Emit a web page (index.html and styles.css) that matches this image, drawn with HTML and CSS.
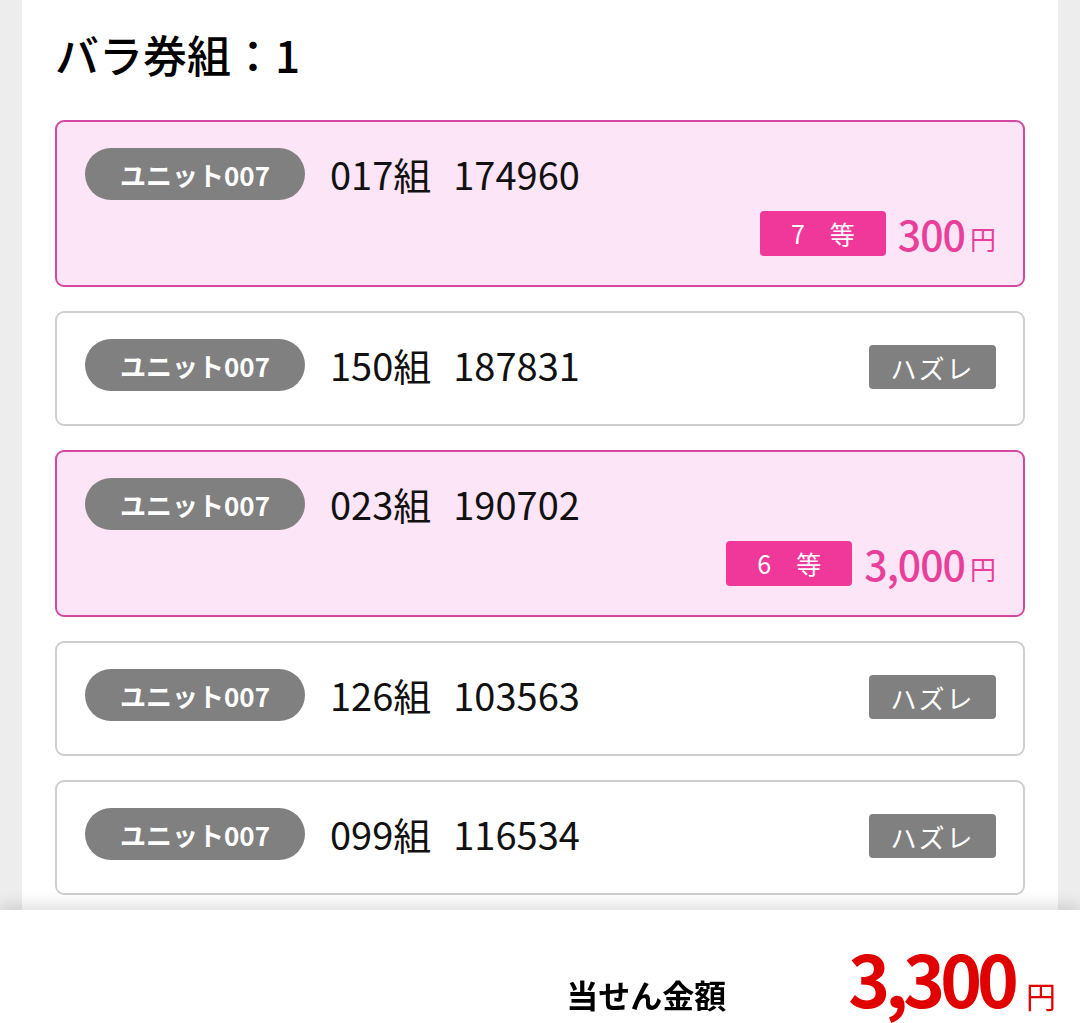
FILE: index.html
```html
<!DOCTYPE html>
<html lang="ja">
<head>
  <meta charset="UTF-8" />
  <title>当せん結果</title>
  <link rel="stylesheet" href="styles.css">
</head>
<body>

  <!-- Result panel -->
  <div class="panel">
    <h2 class="title">バラ券組：1</h2>

    <div class="ticket-list">
      <div class="ticket win">
        <div class="ticket-row">
          <span class="unit">ユニット007</span>
          <span class="number">017組<span class="no">174960</span></span>
        </div>
        <div class="prize-row">
          <span class="rank">7　等</span>
          <span class="amount">300</span><span class="yen">円</span>
        </div>
      </div>

      <div class="ticket">
        <div class="ticket-row">
          <span class="unit">ユニット007</span>
          <span class="number">150組<span class="no">187831</span></span>
          <span class="miss">ハズレ</span>
        </div>
      </div>

      <div class="ticket win">
        <div class="ticket-row">
          <span class="unit">ユニット007</span>
          <span class="number">023組<span class="no">190702</span></span>
        </div>
        <div class="prize-row">
          <span class="rank">6　等</span>
          <span class="amount">3,000</span><span class="yen">円</span>
        </div>
      </div>

      <div class="ticket">
        <div class="ticket-row">
          <span class="unit">ユニット007</span>
          <span class="number">126組<span class="no">103563</span></span>
          <span class="miss">ハズレ</span>
        </div>
      </div>

      <div class="ticket">
        <div class="ticket-row">
          <span class="unit">ユニット007</span>
          <span class="number">099組<span class="no">116534</span></span>
          <span class="miss">ハズレ</span>
        </div>
      </div>
    </div>
  </div>

  <!-- Total footer -->
  <footer class="total-bar">
    <span class="total-label">当せん金額</span>
    <span class="total-amount">3,300</span><span class="total-yen">円</span>
  </footer>

</body>
</html>
```

FILE: styles.css
```css
* { box-sizing: border-box; margin: 0; padding: 0; }
html, body {
  font-family: 'Noto Sans CJK JP', 'Noto Sans', sans-serif;
  background: #ededed;
  color: #111;
}

/* PANEL */
.panel {
  margin: 0 22px;
  background: #fff;
  padding: 26px 33px 140px;
}

.title {
  font-size: 44px;
  font-weight: 500;
  line-height: 56px;
  margin-bottom: 38px;
  color: #000;
}

.ticket-list {
  display: flex;
  flex-direction: column;
  gap: 24px;
}

/* TICKET CARD */
.ticket {
  border: 2px solid #cfcfcf;
  border-radius: 9px;
  padding: 26px 27px 33px 28px;
  background: #fff;
}

.ticket.win {
  background: #fde5f8;
  border-color: #d4499f;
  padding-bottom: 29px;
}

.ticket-row {
  display: flex;
  align-items: center;
}

.unit {
  display: inline-flex;
  align-items: center;
  justify-content: center;
  width: 220px;
  height: 52px;
  border-radius: 26px;
  background: #808080;
  color: #fff;
  font-size: 26px;
  font-weight: bold;
}

.number {
  margin-left: 25px;
  font-size: 38px;
  line-height: 52px;
  color: #111;
}

.number .no { margin-left: 22px; }

.miss {
  margin-left: auto;
  margin-top: 4px;
  width: 127px;
  height: 44px;
  border-radius: 4px;
  background: #808080;
  color: #fff;
  font-size: 26px;
  display: flex;
  align-items: center;
  justify-content: center;
  letter-spacing: 2px;
}

/* PRIZE */
.prize-row {
  display: flex;
  justify-content: flex-end;
  align-items: center;
  height: 45px;
  margin-top: 11px;
  line-height: 1;
}

.rank {
  width: 126px;
  height: 45px;
  border-radius: 4px;
  background: #f0379a;
  color: #fff;
  font-size: 25px;
  display: flex;
  align-items: center;
  justify-content: center;
  margin-right: 12px;
}

.amount {
  color: #e8409a;
  font-size: 41px;
  font-weight: 500;
  letter-spacing: -1px;
}

.yen {
  color: #e8409a;
  font-size: 26px;
  margin-left: 5px;
  padding-top: 10px;
}

/* FOOTER */
.total-bar {
  position: fixed;
  left: 0;
  bottom: 0;
  width: 100%;
  height: 113px;
  background: #fff;
  box-shadow: 0 -6px 14px rgba(0, 0, 0, 0.12);
  display: flex;
  justify-content: flex-end;
  align-items: baseline;
  padding: 32px 24px 0 0;
  line-height: 1;
}

.total-label {
  font-size: 32px;
  font-weight: bold;
  margin-right: 122px;
  color: #000;
}

.total-amount {
  color: #e00000;
  font-size: 71px;
  font-weight: bold;
  letter-spacing: -5px;
  padding-right: 5px;
}

.total-yen {
  color: #e00000;
  font-size: 30px;
  margin-left: 7px;
}
```
